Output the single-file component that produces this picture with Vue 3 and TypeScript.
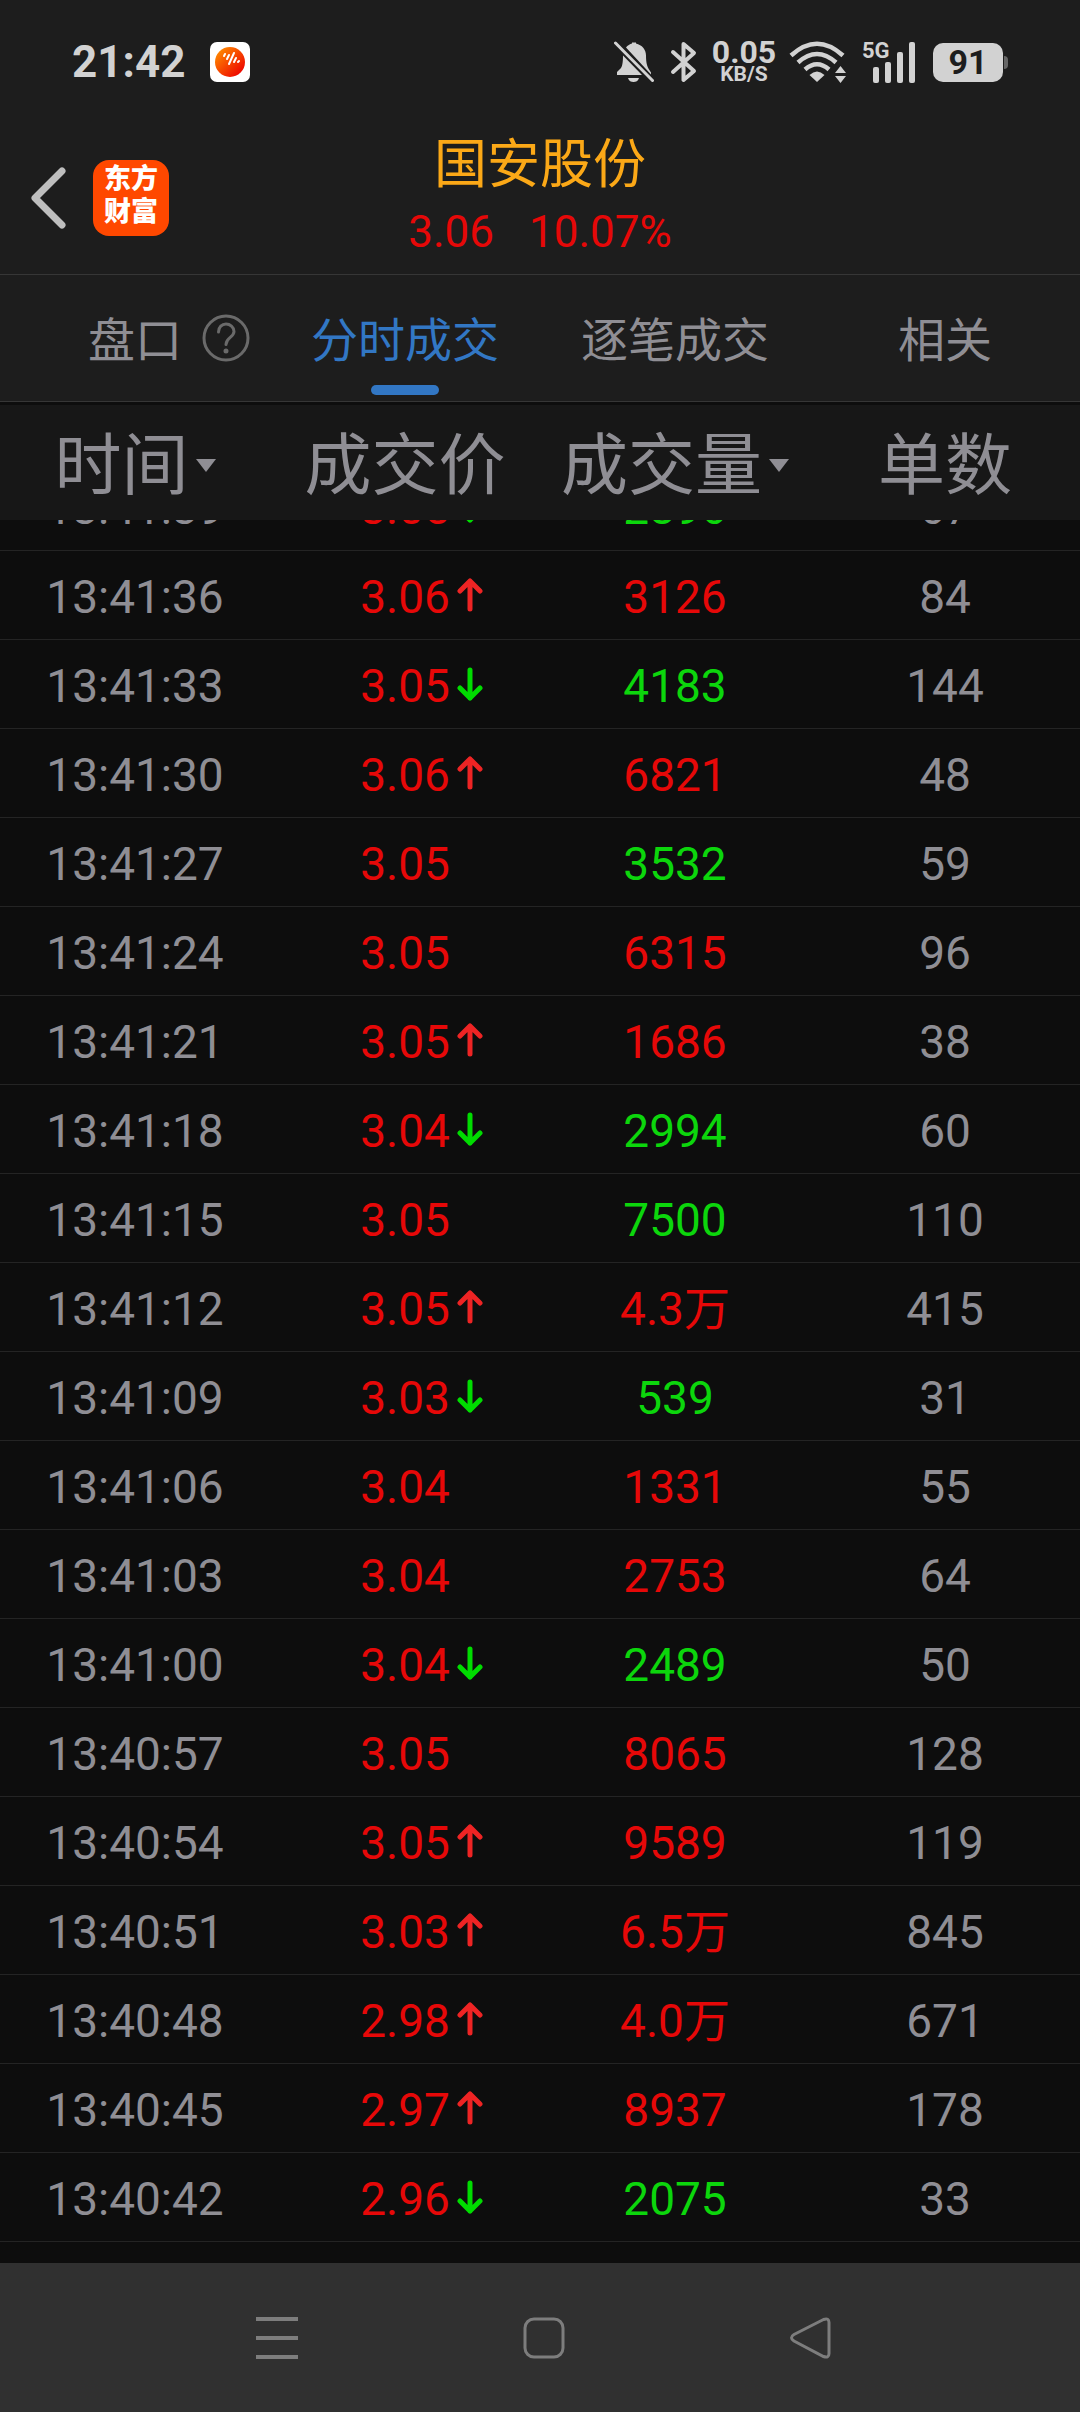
<script setup lang="ts">
import { onMounted, ref } from 'vue'

type Side = 'buy' | 'sell'
type Move = 'up' | 'down' | ''

interface Trade {
  time: string
  price: string
  move: Move
  volume: string
  side: Side
  count: number
}

function trade(time: string, price: string, move: Move, volume: string, side: Side, count: number): Trade {
  return { time, price, move, volume, side, count }
}

const trades: Trade[] = [
  trade('13:41:39', '3.05', 'down', '2896', 'sell', 67),
  trade('13:41:36', '3.06', 'up', '3126', 'buy', 84),
  trade('13:41:33', '3.05', 'down', '4183', 'sell', 144),
  trade('13:41:30', '3.06', 'up', '6821', 'buy', 48),
  trade('13:41:27', '3.05', '', '3532', 'sell', 59),
  trade('13:41:24', '3.05', '', '6315', 'buy', 96),
  trade('13:41:21', '3.05', 'up', '1686', 'buy', 38),
  trade('13:41:18', '3.04', 'down', '2994', 'sell', 60),
  trade('13:41:15', '3.05', '', '7500', 'sell', 110),
  trade('13:41:12', '3.05', 'up', '4.3万', 'buy', 415),
  trade('13:41:09', '3.03', 'down', '539', 'sell', 31),
  trade('13:41:06', '3.04', '', '1331', 'buy', 55),
  trade('13:41:03', '3.04', '', '2753', 'buy', 64),
  trade('13:41:00', '3.04', 'down', '2489', 'sell', 50),
  trade('13:40:57', '3.05', '', '8065', 'buy', 128),
  trade('13:40:54', '3.05', 'up', '9589', 'buy', 119),
  trade('13:40:51', '3.03', 'up', '6.5万', 'buy', 845),
  trade('13:40:48', '2.98', 'up', '4.0万', 'buy', 671),
  trade('13:40:45', '2.97', 'up', '8937', 'buy', 178),
  trade('13:40:42', '2.96', 'down', '2075', 'sell', 33),
]

const tabs = ['盘口', '分时成交', '逐笔成交', '相关']
const activeTab = ref('分时成交')

const columns = [
  { label: '时间', sortable: true },
  { label: '成交价', sortable: false },
  { label: '成交量', sortable: true },
  { label: '单数', sortable: false },
]

// The list opens at its oldest trade.
const list = ref<HTMLElement | null>(null)
onMounted(() => {
  if (list.value) list.value.scrollTop = list.value.scrollHeight
})
</script>

<template>
  <div class="page" lang="zh-CN">
    <div class="status">
      <span class="clock">21:42</span>
      <svg class="app-dot" width="40" height="40" viewBox="0 0 40 40" aria-hidden="true">
        <defs>
          <linearGradient id="dot" x1="0" y1="0" x2="1" y2="1">
            <stop offset="0.1" stop-color="#ff8a00" />
            <stop offset="0.85" stop-color="#ee0a00" />
          </linearGradient>
        </defs>
        <rect width="40" height="40" rx="7" fill="#fff" />
        <circle cx="20" cy="20" r="15" fill="url(#dot)" />
        <g stroke="#fff" stroke-width="2" stroke-linecap="round">
          <path d="M14 14l1-2M17 17l2-4M19 22l5-11M24 20l2-4M28 20l1-1" />
        </g>
      </svg>
      <div class="status-right">
        <svg class="bell" width="40" height="42" viewBox="0 0 40 42" fill="#d2d2d2" aria-hidden="true">
          <path d="M9 14.500L28 34H3v-3l4-4c1.500-2 2-7 2-12.500zM12 6.500c1.500-2 4-3.500 6-4V1.500h4v1c6 1.500 10 6 10 12 0 7 1 11 3 14l2 3v2zM14 37h11c-1 3-3 4-5.500 4S15 40 14 37z" />
          <path d="M1.500 2L38.500 39.500" stroke="#d2d2d2" stroke-width="3" stroke-linecap="round" />
        </svg>
        <svg class="bt" width="28" height="42" viewBox="0 0 28 42" fill="none" stroke="#d2d2d2" stroke-width="4" stroke-linejoin="round" stroke-linecap="round" aria-hidden="true">
          <path d="M3 11L24 30 13.500 39V3L24 12 3 31" />
        </svg>
        <div class="speed"><span class="speed-num">0.05</span><span class="speed-unit">KB/S</span></div>
        <svg class="wifi" width="58" height="42" viewBox="0 0 58 42" aria-hidden="true">
          <g fill="none" stroke="#d2d2d2" stroke-width="4.500">
            <path d="M2 14.500Q28 -9 54 14.500" />
            <path d="M9 21.500Q28 4.500 47 21.500" />
            <path d="M16 28.500Q28 18 40 28.500" />
          </g>
          <path d="M20.500 34Q28 27 35.500 34L28 41z" fill="#d2d2d2" />
          <path d="M46 32l5.500-7 5.500 7zM46 35h11l-5.500 7z" fill="#d2d2d2" />
        </svg>
        <div class="signal">
          <span class="net">5G</span>
          <svg width="44" height="42" viewBox="0 0 44 42" fill="#d2d2d2" aria-hidden="true">
            <rect x="0" y="26" width="6" height="16" rx="2" />
            <rect x="12" y="21" width="6" height="21" rx="2" />
            <rect x="24" y="11" width="6" height="31" rx="2" />
            <rect x="36" y="1" width="6" height="41" rx="2" />
          </svg>
        </div>
        <div class="battery">91</div>
      </div>
    </div>

    <header class="bar">
      <div class="bar-left">
        <button class="back" type="button" aria-label="返回">
          <svg width="36" height="62" viewBox="0 0 36 62" fill="none" stroke="#bebebe" stroke-width="7" stroke-linecap="round" stroke-linejoin="round">
            <path d="M32 4L5 31l27 27" />
          </svg>
        </button>
        <span class="logo">东方<br>财富</span>
      </div>
      <div class="quote">
        <h1 class="name">国安股份</h1>
        <div class="nums"><span>3.06</span><span>10.07%</span></div>
      </div>
    </header>

    <nav class="tabs">
      <button
        v-for="tab in tabs"
        :key="tab"
        type="button"
        class="tab"
        :class="{ active: tab === activeTab }"
        @click="activeTab = tab"
      >
        <span class="tab-label">{{ tab }}</span>
        <svg v-if="tab === '盘口'" class="help" width="48" height="48" viewBox="0 0 48 48" fill="none" stroke="#6a6a6a" stroke-width="3" stroke-linecap="round" aria-hidden="true">
          <circle cx="24" cy="24" r="22" />
          <path d="M16.500 18c0-5 3.500-8 7.500-8s8 3 8 7.500c0 6-8 6-8 13" />
          <circle cx="24" cy="37" r="1.500" fill="#6a6a6a" stroke-width="2" />
        </svg>
      </button>
    </nav>

    <table class="trades">
      <thead>
        <tr>
          <th v-for="col in columns" :key="col.label" scope="col">
            <button v-if="col.sortable" class="sort" type="button">
              {{ col.label }}
              <svg width="20" height="13" viewBox="0 0 20 13" aria-hidden="true"><path d="M0 0h20L10 13z" fill="#8f8e94" /></svg>
            </button>
            <template v-else>{{ col.label }}</template>
          </th>
        </tr>
      </thead>
      <tbody ref="list">
        <tr v-for="t in trades" :key="t.time">
          <td>{{ t.time }}</td>
          <td class="buy">
            <span class="price">
              <span class="price-num">{{ t.price }}</span>
              <svg v-if="t.move" class="arrow" width="26" height="34" viewBox="0 0 26 34" fill="none" stroke-width="5" stroke-linecap="round" stroke-linejoin="round" aria-hidden="true">
                <path v-if="t.move === 'up'" stroke="#ee2424" d="M13 31V3M3 13L13 3l10 10" />
                <path v-else stroke="#00dc00" d="M13 3v28M3 21l10 10 10-10" />
              </svg>
            </span>
          </td>
          <td :class="t.side">{{ t.volume }}</td>
          <td>{{ t.count }}</td>
        </tr>
      </tbody>
    </table>

    <footer class="keys">
      <button type="button" aria-label="最近任务">
        <svg width="42" height="42" viewBox="0 0 42 42" stroke="#7d7d7d" stroke-width="4"><path d="M0 2h42M0 21h42M0 40h42" /></svg>
      </button>
      <button type="button" aria-label="主屏幕">
        <svg width="42" height="42" viewBox="0 0 42 42" fill="none" stroke="#7d7d7d" stroke-width="3"><rect x="2" y="2" width="38" height="38" rx="9" /></svg>
      </button>
      <button type="button" aria-label="返回上一页">
        <svg width="42" height="42" viewBox="0 0 42 42" fill="none" stroke="#7d7d7d" stroke-width="3"><path d="M33.500 2.500L4 17.500q-5 3 0 6.500l29.500 15.500q5.500 2 5.500-3V5.500q0-5-5.500-3z" /></svg>
      </button>
    </footer>
  </div>
</template>

<style>
body {
  background: #0d0d0d;
}
</style>

<style scoped>
.page {
  display: flex;
  flex-direction: column;
  height: 100vh;
  overflow: hidden;
  background: #0d0d0d;
  color: #8f8e94;
  font-family: Roboto, "Noto Sans CJK SC", sans-serif;
}
svg {
  display: block;
  flex: none;
}
button {
  margin: 0;
  padding: 0;
  border: 0;
  background: none;
  color: inherit;
  font: inherit;
}

/* status bar */
.status {
  display: flex;
  align-items: center;
  height: 124px;
  padding: 0 77px 0 72px;
  background: #1d1d1d;
  color: #d2d2d2;
  font-weight: 700;
}
.clock {
  width: 138px;
  font-size: 44px;
  line-height: 48px;
}
.status-right {
  display: flex;
  align-items: center;
  margin-left: auto;
}
.bt {
  margin-left: 16px;
}
.speed {
  display: flex;
  flex-direction: column;
  align-items: center;
  width: 66px;
  margin: 0 12px 0 13px;
}
.speed-num {
  font-size: 32px;
  line-height: 24px;
}
.speed-unit {
  font-size: 21px;
  line-height: 20px;
}
.signal {
  position: relative;
  margin: 0 16px 0 26px;
}
.net {
  position: absolute;
  top: -2px;
  left: -11px;
  font-size: 22px;
  line-height: 24px;
}
.battery {
  position: relative;
  width: 70px;
  height: 39px;
  border-radius: 10px;
  background: #d2d2d2;
  color: #1d1d1d;
  font-size: 34px;
  line-height: 39px;
  text-align: center;
}
.battery::after {
  content: "";
  position: absolute;
  top: 13px;
  left: 71px;
  width: 4px;
  height: 13px;
  border-radius: 0 5px 5px 0;
  background: #666;
}

/* title bar */
.bar {
  display: grid;
  grid-template-columns: 1fr auto 1fr;
  height: 150px;
  border-bottom: 1px solid #363636;
  background: #1d1d1d;
}
.bar-left {
  display: flex;
  align-items: center;
  gap: 27px;
  height: 148px;
  padding-left: 30px;
}
.logo {
  width: 76px;
  height: 76px;
  box-sizing: border-box;
  padding-top: 3px;
  border-radius: 16px;
  background: #ff4800;
  color: #fff;
  font-size: 27px;
  font-weight: 900;
  line-height: 33px;
  text-align: center;
}
.quote {
  padding-top: 9px;
  text-align: center;
}
.name {
  margin: 0;
  color: #fba817;
  font-size: 53px;
  font-weight: 400;
  line-height: 64px;
}
.nums {
  display: flex;
  justify-content: center;
  gap: 35px;
  color: #e60808;
  font-size: 44px;
  line-height: 70px;
}

/* tabs */
.tabs {
  display: grid;
  grid-template-columns: repeat(4, 1fr);
  height: 126px;
  margin-bottom: 3px;
  border-bottom: 1px solid #363636;
  background: #1d1d1d;
}
.tab {
  position: relative;
  display: grid;
  grid-template-columns: 1fr auto 1fr;
  align-items: center;
  column-gap: 20px;
  font-size: 47px;
  line-height: 64px;
}
.tab-label {
  grid-column: 2;
  padding-top: 5px;
  white-space: nowrap;
}
.tab.active {
  color: #3277c4;
}
.tab.active::after {
  content: "";
  position: absolute;
  bottom: 6px;
  left: 50%;
  width: 68px;
  height: 10px;
  margin-left: -34px;
  border-radius: 5px;
  background: #3277c4;
}

/* trade list: the head stays put while the body scrolls */
.trades {
  display: flex;
  flex: 1;
  flex-direction: column;
  min-height: 0;
  text-align: center;
}
thead {
  display: block;
  background: #171717;
}
tbody {
  display: block;
  flex: 1;
  min-height: 0;
  padding-bottom: 21px;
  overflow-y: auto;
  scrollbar-width: none;
}
tr {
  display: grid;
  grid-template-columns: repeat(4, 1fr);
  align-items: center;
  box-sizing: border-box;
}
thead tr {
  height: 115px;
  padding-top: 6px;
}
tbody tr {
  height: 89px;
  padding-top: 3px;
  border-bottom: 1px solid #242424;
}
th {
  padding: 0;
  font-size: 67px;
  font-weight: 400;
  line-height: 96px;
  white-space: nowrap;
}
.sort {
  display: flex;
  align-items: center;
  justify-content: center;
  gap: 7px;
  width: 100%;
}
td {
  padding: 0;
  font-size: 46px;
  line-height: 64px;
}
.buy {
  color: #e60808;
}
.sell {
  color: #0cd60c;
}
.price {
  display: grid;
  grid-template-columns: 1fr auto 1fr;
  align-items: center;
  column-gap: 7px;
}
.price-num {
  grid-column: 2;
}
.arrow {
  margin-bottom: 4px;
}

/* system keys */
.keys {
  display: grid;
  grid-template-columns: repeat(3, 1fr);
  height: 149px;
  padding: 0 136px 0 143px;
  background: #303030;
}
.keys button {
  display: flex;
  align-items: center;
  justify-content: center;
}
</style>
